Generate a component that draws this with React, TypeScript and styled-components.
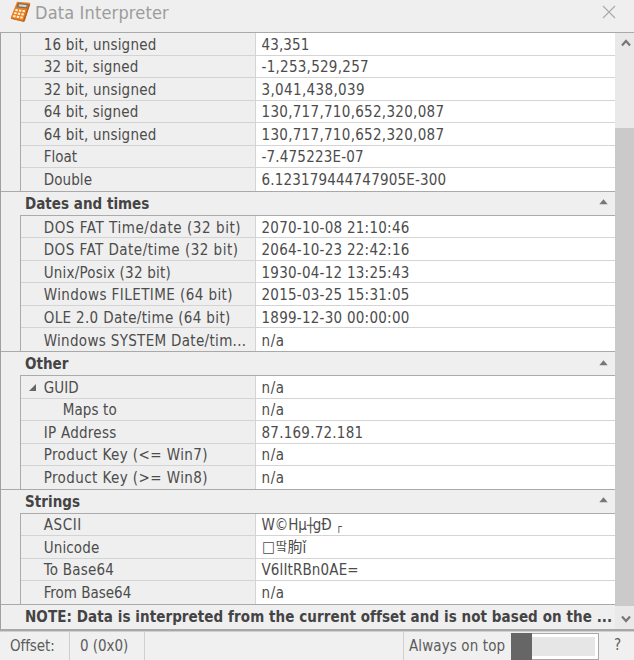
import React from 'react';
import styled, { createGlobalStyle } from 'styled-components';

const GlobalStyle = createGlobalStyle`
  * { box-sizing: border-box; }
  body { margin: 0; background: #f0f0f0; }
`;

const Window = styled.div`
  width: 634px;
  height: 660px;
  display: flex;
  flex-direction: column;
  overflow: hidden;
  background: #efefef;
  color: #4c4c4c;
  font: 15px 'DejaVu Sans Condensed', 'DejaVu Sans', 'Noto Sans CJK KR', sans-serif;
  white-space: nowrap;
`;

const TitleBar = styled.header`
  height: 32px;
  flex: none;
  display: flex;
  align-items: flex-start;
  padding-left: 10px;
  svg { display: block; }
`;

const Title = styled.h1`
  flex: 1;
  margin: 0 0 0 4px;
  font-size: 18px;
  font-weight: 400;
  line-height: 26px;
  letter-spacing: 0.16px;
  color: #9c9c9c;
`;

const CloseButton = styled.button`
  border: 0;
  padding: 5px 18px 0 0;
  background: none;
`;

const Body = styled.main`
  height: 599px;
  flex: none;
  display: flex;
  border-top: 1px solid #a9a9a9;
  border-bottom: 2px solid #a8a8a8;
  box-shadow: 0 1px 0 #d0d0d0;
`;

const Grid = styled.div`
  width: 615px;
  border-left: 1px solid #a0a0a0;
  padding-top: 0.3px;
`;

const Rows = styled.div`
  margin-left: 19px;
  border-left: 1px solid #ababab;
`;

const GroupHeader = styled.div<{ $ls: number }>`
  height: 24.2px;
  display: flex;
  align-items: center;
  justify-content: space-between;
  padding: 1px 7px 0 24px;
  font-weight: 700;
  letter-spacing: ${p => p.$ls}px;
  color: #444;
  border-top: 1px solid #a9a9a9;
  svg { display: block; margin-bottom: 3px; }
`;

const HeaderRule = styled.div`
  margin-left: 19px;
  height: 1px;
  background: #ababab;
`;

const Row = styled.div`
  height: 22.5px;
  display: flex;
  border-bottom: 1px solid #d4d4d4;
  &:last-child { border-bottom: 0; }
`;

const Name = styled.div<{ $ls: number; $indent?: boolean }>`
  width: 235px;
  flex: none;
  display: flex;
  align-items: center;
  padding-top: 1.6px;
  padding-left: ${p => (p.$indent ? 41.7 : 22.7)}px;
  border-right: 1px solid #d4d4d4;
  letter-spacing: ${p => p.$ls}px;
`;

const Expander = styled.span`
  width: 16px;
  margin-left: -16px;
  svg { display: block; }
`;

const Value = styled.div<{ $ls: number }>`
  flex: 1;
  display: flex;
  align-items: center;
  padding-top: 1.6px;
  padding-left: 5.5px;
  background: #fff;
  letter-spacing: ${p => p.$ls}px;
`;

const Glyph = styled.span<{ $size: number; $w: number; $drop?: number; $bold?: boolean }>`
  width: ${p => p.$w}px;
  font-size: ${p => p.$size}px;
  font-weight: ${p => (p.$bold ? 700 : 400)};
  line-height: 15px;
  letter-spacing: 0;
  text-align: center;
  padding-top: ${p => p.$drop ?? 0}px;
`;

const Scrollbar = styled.div`
  width: 19px;
  display: flex;
  flex-direction: column;
  background: #e9e9e9;
  svg { display: block; }
`;

const ScrollArrow = styled.div<{ $h: number; $top: number }>`
  height: ${p => p.$h}px;
  padding: ${p => p.$top}px 0 0 6px;
`;

const Thumb = styled.div`
  height: 478px;
  background: #cacaca;
`;

const StatusBar = styled.footer`
  flex: 1;
  display: flex;
  margin-top: 1px;
  background: #f0f0f0;
  color: #5c5c5c;
`;

const StatusCell = styled.div<{ $w: number; $ls: number }>`
  width: ${p => p.$w}px;
  padding-left: 10px;
  border-right: 1px solid #cfcfcf;
  line-height: 28px;
  letter-spacing: ${p => p.$ls}px;
`;

const StatusSpacer = styled.div`
  width: 259px;
  border-right: 1px solid #cfcfcf;
`;

const TopLabel = styled.label`
  width: 107px;
  padding-left: 5px;
  line-height: 28px;
  letter-spacing: 0.11px;
`;

const Toggle = styled.div`
  width: 88px;
  height: 27px;
  margin-top: 1px;
  display: flex;
  background: #fff;
  border: 1px solid #a8a8a8;
`;

const ToggleKnob = styled.div`
  width: 21px;
  margin: -1px 0 -1px -1px;
  background: #666;
`;

const ToggleTrack = styled.div`
  flex: 1;
  margin: 3px 3px 3px 0;
  background: #e6e6e6;
`;

const Help = styled.div`
  padding-left: 15px;
  line-height: 27px;
`;

const CalculatorIcon = () => (
  <svg width="21" height="24" viewBox="0 0 21 24">
    <path d="M7 1.8 L19.4 2.8 Q20.4 3 20.1 4 L14.6 21 Q14.2 22 13.2 21.8 L1.4 19 Q0.4 18.6 .8 17.6 Z" fill="#e98220" />
    <path d="M20.3 4 L14.6 21.2 L12.8 21.8 L18.6 4.2Z" fill="#b5611c" />
    <path d="M1 18.2 L13.2 21.2" stroke="#c76d1d" strokeWidth="1" />
    <path d="M8 3 L18.2 4 L16.8 8.6 L6.4 7.2Z" fill="#77695c" />
    <path d="M9.2 4.3 L16.8 5 L16.1 7.3 L8.3 6.3Z" fill="#d6d2ca" />
    <g stroke="#fff3e2" strokeWidth="2" strokeDasharray="2.4 1.2">
      <path d="M5.4 10 L15.4 11.4" />
      <path d="M4.3 13 L14.2 14.6" />
      <path d="M3.2 16 L13 17.8" />
    </g>
  </svg>
);

const CollapseIcon = () => (
  <svg width="9" height="6" viewBox="0 0 9 6"><path d="M4.5 .2 L8.7 5.2 H.3Z" fill="#777" /></svg>
);

interface Item {
  name: string;
  ls: number;
  value: React.ReactNode;
  vls?: number;
  indent?: boolean;
  open?: boolean;
}

const numbers: Item[] = [
  { name: '16 bit, unsigned', ls: 0.2, value: '43,351', vls: 0.14 },
  { name: '32 bit, signed', ls: 0.17, value: '-1,253,529,257', vls: 0.27 },
  { name: '32 bit, unsigned', ls: 0.2, value: '3,041,438,039', vls: 0.36 },
  { name: '64 bit, signed', ls: 0.17, value: '130,717,710,652,320,087', vls: 0.3 },
  { name: '64 bit, unsigned', ls: 0.2, value: '130,717,710,652,320,087', vls: 0.3 },
  { name: 'Float', ls: 0, value: '-7.475223E-07', vls: 0.19 },
  { name: 'Double', ls: 0.1, value: '6.123179444747905E-300', vls: 0.18 },
];

const dates: Item[] = [
  { name: 'DOS FAT Time/date (32 bit)', ls: 0.57, value: '2070-10-08 21:10:46', vls: 0.25 },
  { name: 'DOS FAT Date/time (32 bit)', ls: 0.49, value: '2064-10-23 22:42:16', vls: 0.25 },
  { name: 'Unix/Posix (32 bit)', ls: 0.21, value: '1930-04-12 13:25:43', vls: 0.25 },
  { name: 'Windows FILETIME (64 bit)', ls: 0.43, value: '2015-03-25 15:31:05', vls: 0.25 },
  { name: 'OLE 2.0 Date/time (64 bit)', ls: 0.35, value: '1899-12-30 00:00:00', vls: 0.25 },
  { name: 'Windows SYSTEM Date/tim...', ls: 0.32, value: 'n/a' },
];

const other: Item[] = [
  { name: 'GUID', ls: 0.06, value: 'n/a', open: true },
  { name: 'Maps to', ls: 0.1, value: 'n/a', indent: true },
  { name: 'IP Address', ls: 0.28, value: '87.169.72.181', vls: 0.24 },
  { name: 'Product Key (<= Win7)', ls: 0.42, value: 'n/a' },
  { name: 'Product Key (>= Win8)', ls: 0.42, value: 'n/a' },
];

const strings: Item[] = [
  {
    name: 'ASCII', ls: 0.6, vls: -0.1,
    value: <>W©Hµ<Glyph $size={14} $w={6}>┼</Glyph>gÐ<Glyph $size={11} $w={15} $drop={2} $bold>┌</Glyph></>,
  },
  {
    name: 'Unicode', ls: 0.13, vls: 0,
    value: <><Glyph $size={15} $w={14}>□</Glyph><Glyph $size={12} $w={12}>땈</Glyph><Glyph $size={15} $w={15}>朐</Glyph>ǐ</>,
  },
  { name: 'To Base64', ls: 0.25, value: 'V6lItRBn0AE=', vls: 0.13 },
  { name: 'From Base64', ls: 0, value: 'n/a' },
];

const ItemRows = ({ items }: { items: Item[] }) => (
  <Rows>
    {items.map((it, i) => (
      <Row key={i}>
        <Name $ls={it.ls} $indent={it.indent}>
          {it.open && (
            <Expander>
              <svg width="9" height="9" viewBox="0 0 9 9"><path d="M8 1 V8 H1Z" fill="#666" /></svg>
            </Expander>
          )}
          {it.name}
        </Name>
        <Value $ls={it.vls ?? 0.6}>{it.value}</Value>
      </Row>
    ))}
  </Rows>
);

const Group = ({ title, ls, items }: { title: string; ls: number; items: Item[] }) => (
  <>
    <GroupHeader $ls={ls}>{title}<CollapseIcon /></GroupHeader>
    <HeaderRule />
    <ItemRows items={items} />
  </>
);

export default function App() {
  return (
    <>
      <GlobalStyle />
      <Window>
        <TitleBar>
          <CalculatorIcon />
          <Title>Data Interpreter</Title>
          <CloseButton aria-label="Close">
            <svg width="14" height="14" viewBox="0 0 14 14"><path d="M1 1 L13 13 M13 1 L1 13" stroke="#a8a8a8" strokeWidth="1.1" /></svg>
          </CloseButton>
        </TitleBar>
        <Body>
          <Grid>
            <ItemRows items={numbers} />
            <Group title="Dates and times" ls={0.02} items={dates} />
            <Group title="Other" ls={0} items={other} />
            <Group title="Strings" ls={0.05} items={strings} />
            <GroupHeader $ls={0.076}>NOTE: Data is interpreted from the current offset and is not based on the ...</GroupHeader>
          </Grid>
          <Scrollbar>
            <ScrollArrow $h={95} $top={6}>
              <svg width="10" height="8" viewBox="0 0 10 8"><path d="M1 6.5 L5 2 L9 6.5" fill="none" stroke="#777" strokeWidth="2.2" /></svg>
            </ScrollArrow>
            <Thumb />
            <ScrollArrow $h={22} $top={9}>
              <svg width="10" height="8" viewBox="0 0 10 8"><path d="M1 1.5 L5 6 L9 1.5" fill="none" stroke="#777" strokeWidth="2.2" /></svg>
            </ScrollArrow>
          </Scrollbar>
        </Body>
        <StatusBar>
          <StatusCell $w={70} $ls={-0.09}>Offset:</StatusCell>
          <StatusCell $w={75} $ls={-0.05}>0 (0x0)</StatusCell>
          <StatusSpacer />
          <TopLabel>Always on top</TopLabel>
          <Toggle><ToggleKnob /><ToggleTrack /></Toggle>
          <Help>?</Help>
        </StatusBar>
      </Window>
    </>
  );
}
